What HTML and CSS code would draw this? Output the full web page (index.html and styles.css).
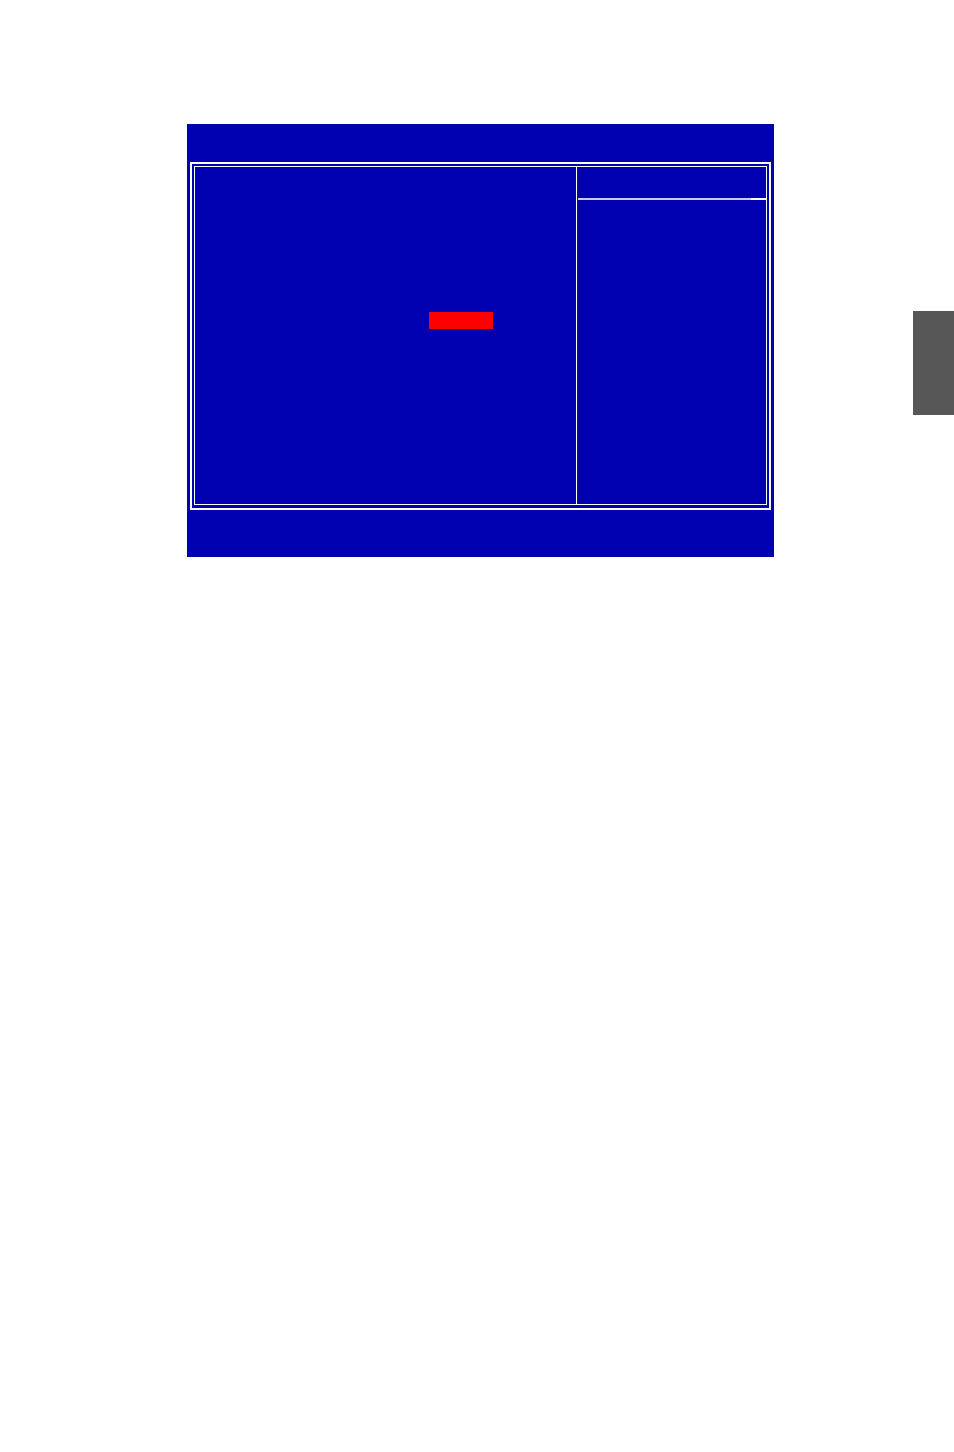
FILE: index.html
```html
<!DOCTYPE html>
<html lang="en">
<head>
    <meta charset="UTF-8">
    <meta name="viewport" content="width=device-width, initial-scale=1.0">
    <title>BIOS Setup</title>
    <link rel="stylesheet" href="styles.css">
</head>
<body>
    <div class="page">
        <div class="screen">
            <div class="frame">
                <div class="panel">
                    <div class="options">
                        <div class="selected"></div>
                    </div>
                    <div class="help">
                        <div class="help-title"></div>
                        <div class="help-rule"></div>
                    </div>
                </div>
            </div>
        </div>
        <div class="side-tab"></div>
    </div>
</body>
</html>
```

FILE: styles.css
```css
body {
  margin: 0;
  background-color: #fff;
  font-family: "Liberation Sans", Arial, sans-serif;
}

.page {
  display: flex;
  align-items: flex-start;
  padding-top: 124px;
  height: 1328px;
}

.screen {
  margin-left: 187px;
  width: 587px;
  height: 433px;
  background-color: #0000b0;
  padding: 38px 0 0 3px;
  box-sizing: border-box;
}

/* double white border round the menu */
.frame {
  width: 581px;
  height: 348px;
  border: 2px solid #fff;
  padding: 2px;
  box-sizing: border-box;
}

.panel {
  display: flex;
  height: 339px;
  border: 1px solid #fff;
  box-sizing: border-box;
}

.options {
  width: 381px;
  border-right: 1px solid #fff;
}

.selected {
  margin: 145px 0 0 234px;
  width: 64px;
  height: 17px;
  background-color: #f00;
}

.help {
  flex: 1;
}

.help-title {
  height: 31px;
}

.help-rule {
  margin-left: 1px;
  height: 2px;
  background: linear-gradient(to right, #c8c8e8 0, #c8c8e8 92%, #fff 92%);
}

.side-tab {
  margin-left: auto;
  margin-top: 187px;
  width: 41px;
  height: 104px;
  background-color: #575757;
}
```
